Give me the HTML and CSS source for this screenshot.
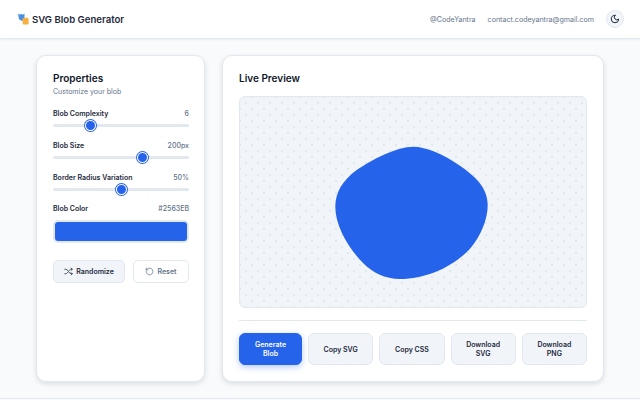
FILE: index.html
```html
<!DOCTYPE html>
<html lang="en">
<head>
<meta charset="utf-8">
<title>SVG Blob Generator</title>
<link rel="stylesheet" href="styles.css">
</head>
<body>
<header class="topbar">
  <div class="brand">
    <svg class="logo" viewBox="0 0 12 12" width="12" height="12"><path d="M0 .5l2 1.2L3.2.8l1.6 1L6.5.5v5.2L4 8 1 6.3z" fill="#4a90e2"/><path d="M4.6 5.2l4.6-.6 1.4 1.4v4.6a1 1 0 0 1-1 1H5.6a1 1 0 0 1-1-1z" fill="#f5b041"/></svg>
    <span class="brand-name">SVG Blob Generator</span>
  </div>
  <div class="top-links">
    <span>@CodeYantra</span>
    <span>contact.codeyantra@gmail.com</span>
    <button class="theme-btn"><svg viewBox="0 0 24 24" width="10" height="10" fill="none" stroke="#1e293b" stroke-width="2.4" stroke-linecap="round" stroke-linejoin="round"><path d="M12 3a6 6 0 0 0 9 9 9 9 0 1 1-9-9z"/></svg></button>
  </div>
</header>
<main class="layout">
  <section class="card props">
    <h2 class="card-title">Properties</h2>
    <p class="subtitle">Customize your blob</p>
    <div class="control">
      <div class="row"><label>Blob Complexity</label><span class="val">6</span></div>
      <div class="track"><span class="thumb t1"></span></div>
    </div>
    <div class="control">
      <div class="row"><label>Blob Size</label><span class="val">200px</span></div>
      <div class="track"><span class="thumb t2"></span></div>
    </div>
    <div class="control">
      <div class="row"><label>Border Radius Variation</label><span class="val">50%</span></div>
      <div class="track"><span class="thumb t3"></span></div>
    </div>
    <div class="control color">
      <div class="row"><label>Blob Color</label><span class="val">#2563EB</span></div>
      <div class="swatch"><div class="swatch-fill"></div></div>
    </div>
    <div class="side-actions">
      <button class="btn grey"><svg viewBox="0 0 24 24" width="9" height="9" fill="none" stroke="#1e293b" stroke-width="2" stroke-linecap="round" stroke-linejoin="round"><path d="M2 6h3c6 0 8 12 14 12h3M2 18h3c2 0 4-2 5-4M14 9c1-2 3-3 5-3h3M19 3l3 3-3 3M19 15l3 3-3 3"/></svg>Randomize</button>
      <button class="btn ghost"><svg viewBox="0 0 24 24" width="9" height="9" fill="none" stroke="#64748b" stroke-width="2" stroke-linecap="round" stroke-linejoin="round"><path d="M3 12a9 9 0 1 0 3-6.7L3 8M3 3v5h5"/></svg>Reset</button>
    </div>
  </section>
  <section class="card preview">
    <h2 class="card-title">Live Preview</h2>
    <div class="stage">
      <svg class="blob" viewBox="0 0 200 200" width="200" height="200"><path fill="#2563eb" d="M100.3 44.7C113 44.7 131 52.5 147 63.7C160 73 174.7 84 174.7 103C174.7 117 168 134 157 146.7C140 165 113 177 87 177C72 177 60 171 50.3 161.3C37 148 22.3 125 22.3 104.7C22.3 90 30 78 43.7 68C60 57 84 44.7 100.3 44.7Z"/></svg>
    </div>
    <div class="actions">
      <button class="act primary">Generate Blob</button>
      <button class="act">Copy SVG</button>
      <button class="act">Copy CSS</button>
      <button class="act">Download SVG</button>
      <button class="act">Download PNG</button>
    </div>
  </section>
</main>
<div class="foot"></div>
</body>
</html>
```
FILE: styles.css
```css
* { box-sizing: border-box; }
html, body { margin: 0; height: 100%; }
body {
  width: 640px; height: 400px; overflow: hidden;
  background: #f8fafc;
  font-family: Inter, "Liberation Sans", sans-serif;
  color: #0f172a;
  display: flex; flex-direction: column;
}
.topbar {
  height: 39px; flex: none;
  background: #fff;
  border-bottom: 1px solid #e2e8f0;
  box-shadow: 0 1px 2px rgba(15,23,42,.05);
  display: flex; align-items: center; justify-content: space-between;
  padding: 0 16px 0 18px;
}
.brand { display: flex; align-items: center; gap: 2px; }
.brand-name { font-size: 9.6px; font-weight: 600; color: #1e293b; }
.logo { display: block; }
.top-links { display: flex; align-items: center; gap: 12px; font-size: 7.1px; color: #64748b; }
.theme-btn {
  width: 18px; height: 18px; padding: 0; border-radius: 50%;
  background: #f1f5f9; border: 1px solid #e2e8f0;
  display: flex; align-items: center; justify-content: center;
}
.layout {
  flex: 1; display: flex; gap: 17px;
  padding: 16px 36px 16px 36px;
}
.card {
  background: #fff; border: 1px solid #e2e8f0; border-radius: 10px;
  box-shadow: 0 2px 5px rgba(15,23,42,.12);
  padding: 16px;
}
.props { width: 169px; flex: none; padding-right: 15px; }
.preview { flex: 1; display: flex; flex-direction: column; }
.card-title { margin: 0; font-size: 10px; font-weight: 600; line-height: 13px; color: #0f172a; }
.subtitle { margin: 2px 0 0; font-size: 7px; line-height: 9px; color: #64748b; }
.control { margin-top: 14px; }
.subtitle + .control { margin-top: 13px; }
.row { display: flex; justify-content: space-between; align-items: center; font-size: 7px; line-height: 10px; }
.row label { font-weight: 600; color: #1e293b; }
.val { color: #64748b; font-weight: 500; }
.track { position: relative; height: 3px; background: #e2e8f0; border-radius: 2px; margin-top: 5px; }
.thumb {
  position: absolute; top: -3px; width: 9px; height: 9px; border-radius: 50%;
  background: #2563eb; box-shadow: 0 0 0 1px #fff, 0 0 0 2px #2563eb;
}
.t1 { left: 32.5px; }
.t2 { left: 84.5px; }
.t3 { left: 63.5px; }
.color { margin-top: 13px; }
.swatch { margin-top: 6px; height: 23px; border: 2px solid #e2e8f0; border-radius: 5px; background: #fff; }
.swatch-fill { height: 100%; background: #2563eb; border-radius: 3px; }
.side-actions { display: flex; gap: 8px; margin-top: 17px; }
button { font-family: inherit; }
.btn {
  height: 23px; border-radius: 5px; font-size: 7px; font-weight: 600;
  display: flex; align-items: center; justify-content: center; gap: 3px; padding: 0;
}
.btn.grey { width: 72px; background: #f1f5f9; border: 1px solid #e2e8f0; color: #1e293b; }
.btn.ghost { width: 56px; background: #fff; border: 1px solid #e2e8f0; color: #64748b; }
.stage {
  margin-top: 11px; height: 212px;
  border: 1px solid #e2e8f0; border-radius: 6px;
  background-color: #f1f5f9;
  background-image: radial-gradient(#e2e8f0 1px, transparent 1px), radial-gradient(#e2e8f0 1px, transparent 1px);
  background-size: 12px 12px;
  background-position: 0 0, 6px 6px;
  display: flex; align-items: center; justify-content: center;
}
.blob { display: block; flex: none; }
.actions {
  margin-top: 12px; padding-top: 12px; border-top: 1px solid #e2e8f0;
  display: grid; grid-template-columns: 63px repeat(4, 1fr); gap: 6px;
}
.act {
  height: 32px; border-radius: 6px; background: #f1f5f9; border: 1px solid #e2e8f0;
  font-size: 7px; font-weight: 600; color: #1e293b; line-height: 9px; padding: 0 10px;
}
.act.primary { background: #2563eb; border-color: #2563eb; color: #fff; box-shadow: 0 2px 6px rgba(37,99,235,.35); }
.foot { height: 1px; flex: none; background: #e2e8f0; margin-bottom: 1px; }
```
